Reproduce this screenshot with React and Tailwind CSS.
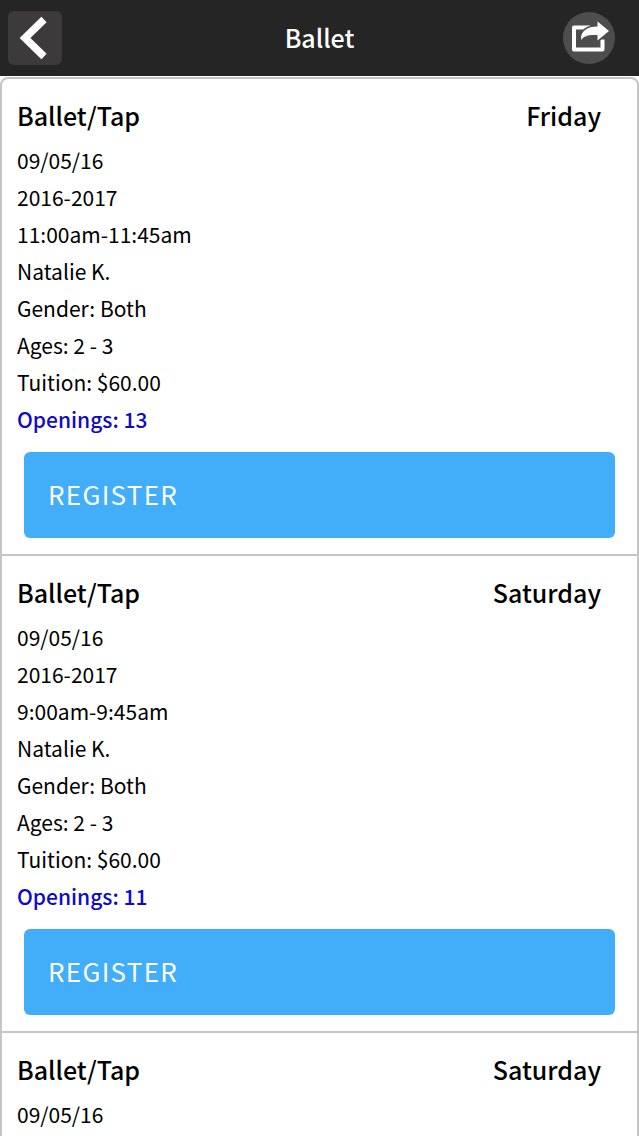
import React from 'react';

const classes = [
  { id: 1, name: 'Ballet/Tap', day: 'Friday', date: '09/05/16', session: '2016-2017', time: '11:00am-11:45am', teacher: 'Natalie K.', gender: 'Both', ages: '2 - 3', tuition: '$60.00', openings: 13 },
  { id: 2, name: 'Ballet/Tap', day: 'Saturday', date: '09/05/16', session: '2016-2017', time: '9:00am-9:45am', teacher: 'Natalie K.', gender: 'Both', ages: '2 - 3', tuition: '$60.00', openings: 11 },
  { id: 3, name: 'Ballet/Tap', day: 'Saturday', date: '09/05/16', session: '2016-2017', time: '10:00am-10:45am', teacher: 'Natalie K.', gender: 'Both', ages: '2 - 3', tuition: '$60.00', openings: 12 },
];

function Header() {
  return (
    <header className="flex h-[76px] shrink-0 items-center justify-between bg-[#262526] pl-2 pr-6 text-white">
      {/* Back */}
      <button type="button" aria-label="Back" className="h-[54px] w-[54px] rounded-md bg-[#3c3a3b]">
        <svg className="h-full w-full" viewBox="0 0 54 54" fill="none" stroke="currentColor" strokeWidth="7.5">
          <path d="M36 8.500L17 27l19 18.500" />
        </svg>
      </button>

      <h1 className="pb-0.5 pl-3.5 text-[25px] font-medium leading-[40px]">Ballet</h1>

      {/* Share */}
      <button type="button" aria-label="Share" className="h-[52px] w-[52px] rounded-full bg-[#4e4d4e]">
        <svg className="h-full w-full" viewBox="0 0 52 52">
          <path d="M27 15.500H11v22h28.500v-10" fill="none" stroke="currentColor" strokeWidth="4" strokeLinejoin="round" />
          <path d="M46 19L34.500 9.500v5C24 14.500 17.500 19 18 28c3-4.500 8.500-5.500 16.500-5v5.500z" fill="currentColor" stroke="#4e4d4e" strokeWidth="3" />
          <path d="M46 19L34.500 9.500v5C24 14.500 17.500 19 18 28c3-4.500 8.500-5.500 16.500-5v5.500z" fill="currentColor" />
        </svg>
      </button>
    </header>
  );
}

function ClassItem({ item }) {
  return (
    <li className="border-b-2 border-[#c5c4c6] px-[15px] pb-4 pt-4">
      <div className="mb-[7px] flex items-center justify-between pr-[21px] text-[25px] font-medium leading-[40px]">
        <h2>{item.name}</h2>
        <span>{item.day}</span>
      </div>

      <div className="text-[21px] leading-[37px]">
        <p>{item.date}</p>
        <p>{item.session}</p>
        <p>{item.time}</p>
        <p>{item.teacher}</p>
        <p>Gender: {item.gender}</p>
        <p>Ages: {item.ages}</p>
        <p>Tuition: {item.tuition}</p>
        <p className="font-medium text-[#1109c8]">Openings: {item.openings}</p>
      </div>

      <div className="px-[7px] pt-3.5">
        <button type="button" className="h-[86px] w-full rounded-md bg-[#42aefa] px-6 pb-1 text-left text-[26px] tracking-wider text-white">
          REGISTER
        </button>
      </div>
    </li>
  );
}

export default function App() {
  return (
    <div className="flex h-screen flex-col bg-white font-['Noto_Sans_CJK_SC','Noto_Sans',sans-serif] text-black">
      <Header />
      <main className="min-h-0 flex-1 overflow-y-auto pt-px [scrollbar-width:none]">
        <ul className="rounded-t-lg border-2 border-[#c5c4c6]">
          {classes.map((item) => (
            <ClassItem key={item.id} item={item} />
          ))}
        </ul>
      </main>
    </div>
  );
}
